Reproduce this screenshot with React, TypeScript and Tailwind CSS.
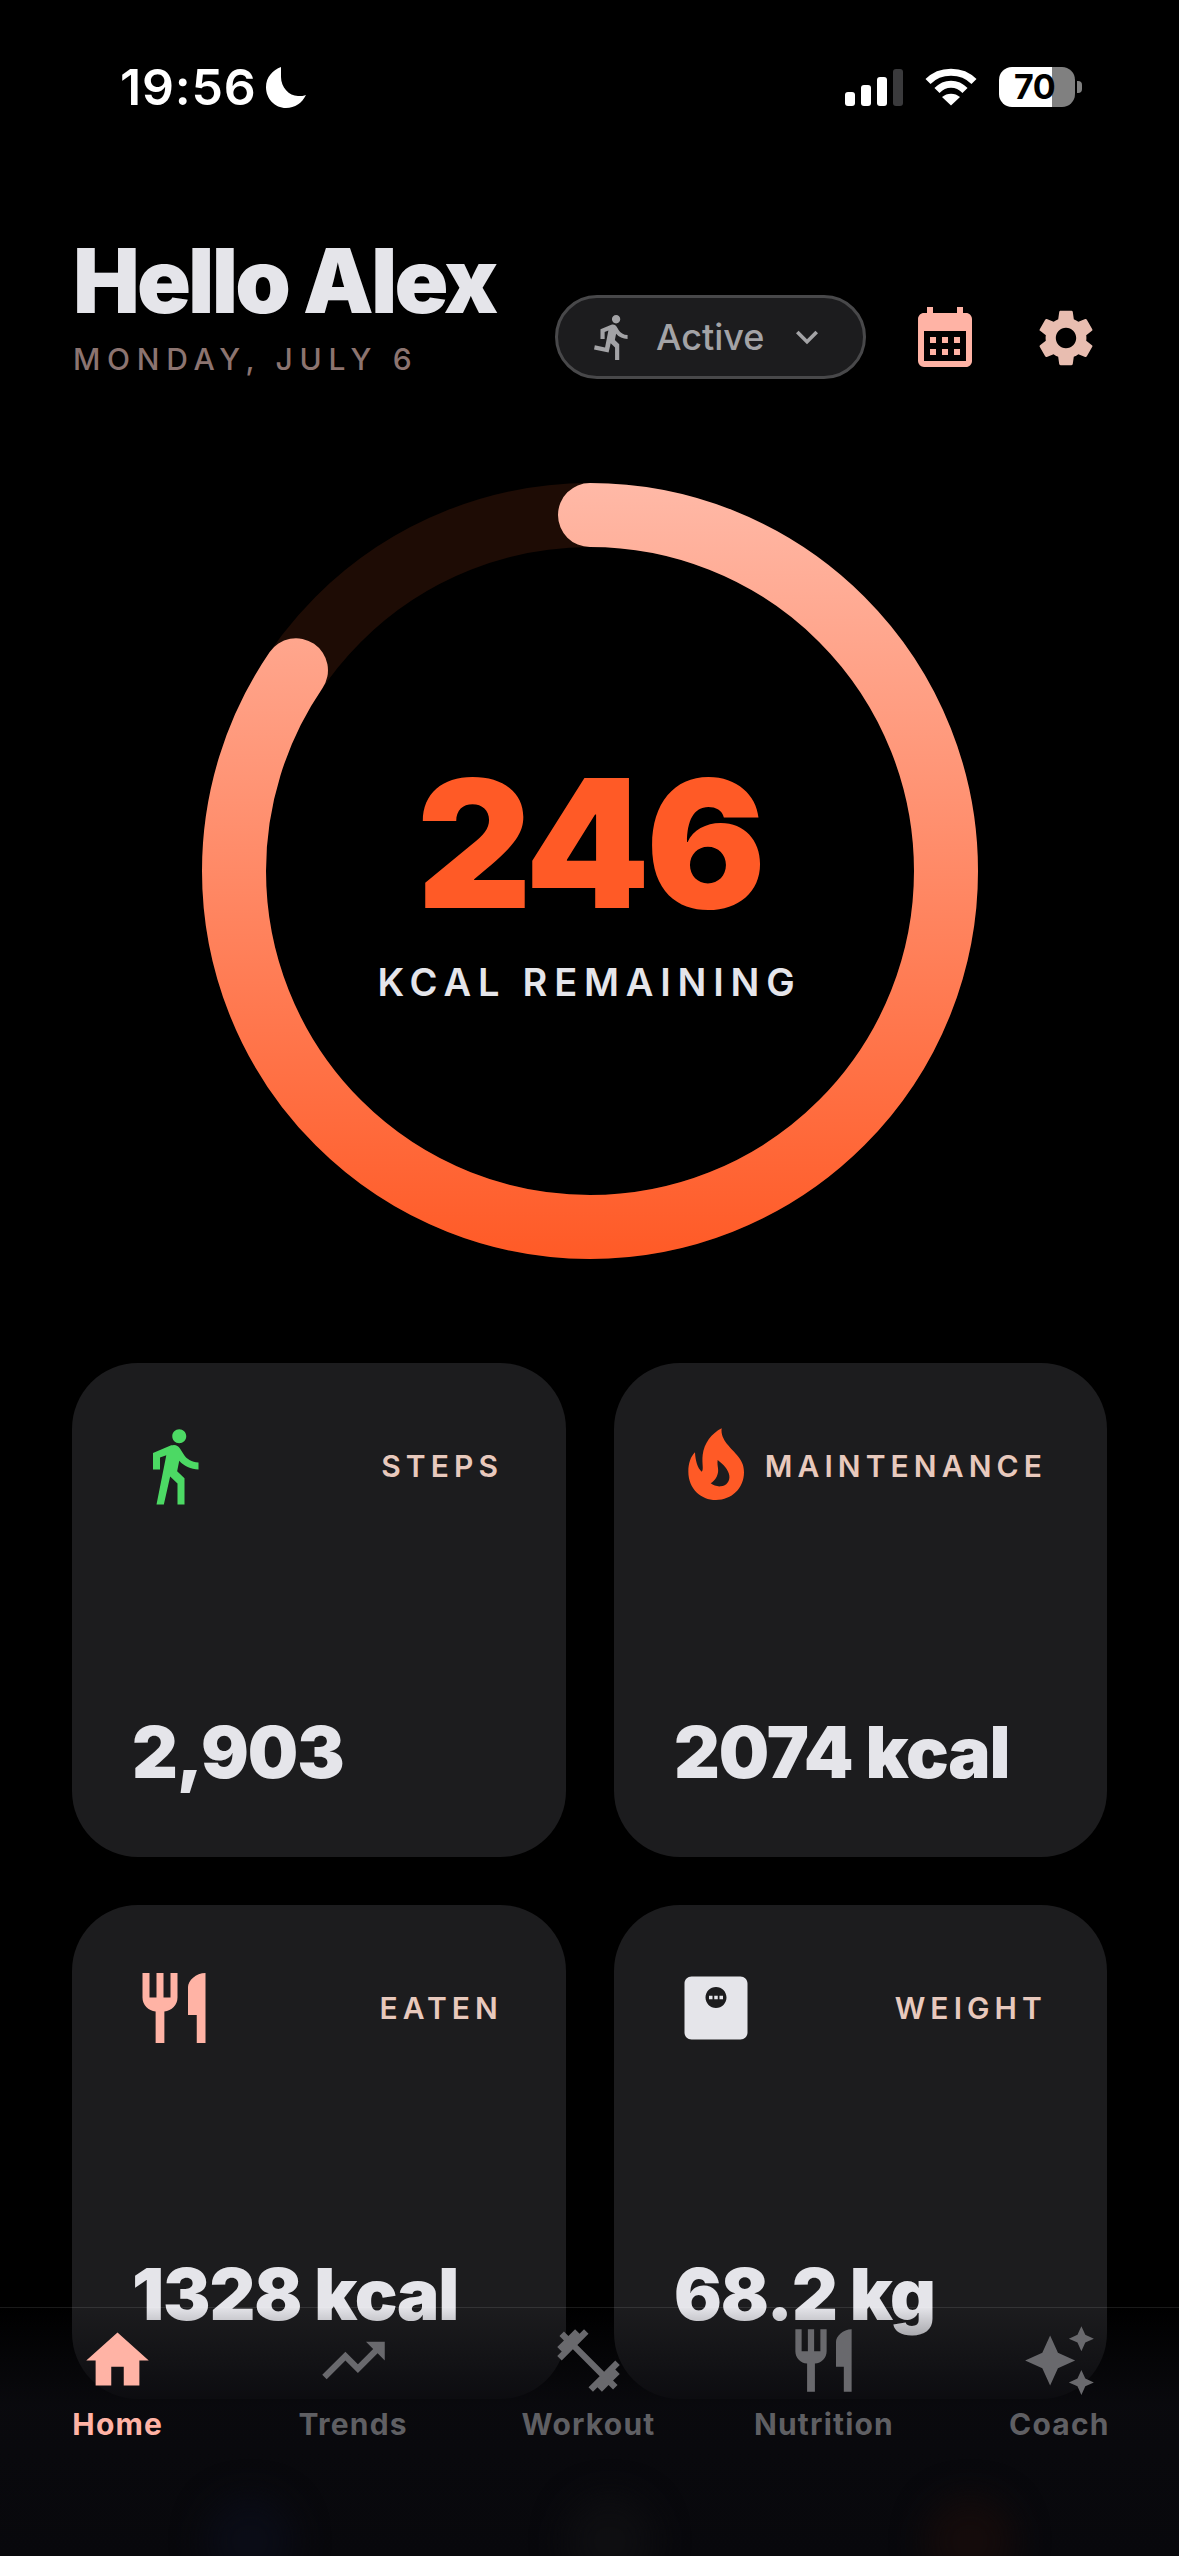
import React from 'react';
import {
  MdAutoAwesome,
  MdCalendarMonth,
  MdDirectionsRun,
  MdDirectionsWalk,
  MdFitnessCenter,
  MdHome,
  MdKeyboardArrowDown,
  MdMonitorWeight,
  MdRestaurant,
  MdSettings,
  MdTrendingUp,
} from 'react-icons/md';

const StatusBar: React.FC = () => (
  <div className="flex h-[176px] items-start justify-between pt-[67px] pl-[120px] pr-[97px]">
    <div className="flex items-center gap-[9px]">
      <span className="text-[50px] leading-[41px] font-semibold tracking-[0.8px] text-white">19:56</span>
      <svg width="40" height="41" viewBox="0 0 40 41" fill="#fff">
        <path d="M15 0C7 3 0 10 0 20c0 12 9 21 20 21 9 0 16-5 20-13-2 1-5 1-8 1C23 29 15 20 15 10c0-4 0-7 0-10z" />
      </svg>
    </div>
    <div className="flex items-center gap-[22px]">
      <div className="flex h-[38px] items-end gap-[6px]">
        <div className="h-[14px] w-[10px] rounded-[3px] bg-white" />
        <div className="h-[21px] w-[10px] rounded-[3px] bg-white" />
        <div className="h-[29px] w-[10px] rounded-[3px] bg-white" />
        <div className="h-[37px] w-[10px] rounded-[3px] bg-[#3a3a3c]" />
      </div>
      <svg width="52" height="38" viewBox="0 0 52 38" fill="none" stroke="#fff" strokeWidth="7">
        <path d="M3 13.5C15 1 37 1 49 13.5" />
        <path d="M12 22.5C20 14 32 14 40 22.5" />
        <path d="M26 37.5 L17 29 C22 24.5 30 24.5 35 29 Z" fill="#fff" stroke="none" />
      </svg>
      <div className="flex items-center gap-[2px]">
        <div className="flex h-[40px] w-[76px] items-center rounded-[13px] bg-[linear-gradient(90deg,#fff_70%,#808080_70%)]">
          <span className="ml-[15px] text-[34px] leading-none font-bold tracking-[-0.5px] text-black">70</span>
        </div>
        <div className="h-[12px] w-[5px] rounded-r-[4px] bg-[#808080]" />
      </div>
    </div>
  </div>
);

const Header: React.FC = () => (
  <div className="flex h-[236px] items-start pl-[73px]">
    <div className="w-[482px]">
      <h1 className="mt-[60px] text-[89px] leading-[90px] font-black tracking-[-2.8px] text-[#e5e5ea]">Hello Alex</h1>
      <p className="mt-[15px] text-[30px] leading-[36px] font-medium tracking-[6.7px] text-[#8c7470]">MONDAY, JULY 6</p>
    </div>
    <div className="mt-[119px] flex h-[84px] w-[311px] items-center rounded-full border-[3px] border-[#48484a] bg-[#1c1c1e] pl-[30px] text-[#a3a3a6]">
      <MdDirectionsRun size={50} className="shrink-0" />
      <span className="ml-[18px] text-[36px] leading-none font-medium">Active</span>
      <MdKeyboardArrowDown size={44} className="ml-[20px] shrink-0" />
    </div>
    <MdCalendarMonth size={72} className="mt-[125px] ml-[43px] shrink-0 text-[#ffb3a5]" />
    <MdSettings size={68} className="mt-[128px] ml-[51px] shrink-0 text-[#e8bdb0]" />
  </div>
);

const CalorieRing: React.FC = () => {
  const radius = 356;
  const circumference = 2 * Math.PI * radius;
  const progress = 0.845;
  return (
    <div className="relative mx-auto mt-[71px] h-[776px] w-[776px]">
      <svg width="776" height="776" viewBox="0 0 776 776" fill="none">
        <defs>
          <linearGradient id="ringGradient" gradientUnits="userSpaceOnUse" x1="776" y1="388" x2="0" y2="388">
            <stop offset="0" stopColor="#ffb9a7" />
            <stop offset="1" stopColor="#ff5a26" />
          </linearGradient>
        </defs>
        <circle cx="388" cy="388" r={radius} stroke="#1e0c05" strokeWidth="64" />
        <circle
          cx="388"
          cy="388"
          r={radius}
          stroke="url(#ringGradient)"
          strokeWidth="64"
          strokeLinecap="round"
          strokeDasharray={`${circumference * progress} ${circumference}`}
          transform="rotate(-90 388 388)"
        />
      </svg>
      <div className="absolute inset-0 flex flex-col items-center">
        <span className="mt-[266px] text-[178px] leading-[190px] font-black tracking-[-4px] text-[#ff5a26]">246</span>
        <span className="mt-[20px] text-[38px] leading-[46px] font-semibold tracking-[6.8px] text-[#e5e5ea]">
          KCAL REMAINING
        </span>
      </div>
    </div>
  );
};

// md flame has a closed inner drop, this one is open like the reference
const FlameIcon: React.FC = () => (
  <svg width="84" height="84" viewBox="12 27 252 252" fill="#ff5a26" fillRule="evenodd">
    <path d="M155 40C150 75 185 100 205 125C218 142 222 155 222 172C222 220 185 255 138 255C92 255 55 220 55 170C55 145 62 125 75 112C76 135 82 160 95 170C102 165 95 145 98 120C102 85 125 55 155 40ZM143 135C140 155 150 165 140 185C135 195 128 200 122 205C130 212 142 215 152 214C170 212 180 198 178 182C176 165 160 148 143 135Z" />
  </svg>
);

type StatCardProps = {
  icon: React.ReactNode;
  label: string;
  value: string;
  left?: boolean;
};

const StatCard: React.FC<StatCardProps> = ({ icon, label, value, left }) => (
  <div className="flex h-[494px] flex-col justify-between rounded-[66px] bg-[#1c1c1e] pt-[61px] pr-[60px] pb-[69px] pl-[60px]">
    <div className="flex h-[84px] items-center justify-between">
      {icon}
      <span
        className={`text-[30px] leading-none font-semibold tracking-[5.1px] text-[#e8c9bd] ${left ? 'mr-[3px]' : ''}`}
      >
        {label}
      </span>
    </div>
    <span className="text-[71px] leading-none font-black tracking-[-1.1px] text-[#e5e5ea]">{value}</span>
  </div>
);

const navItems = [
  { label: 'Home', icon: MdHome, active: true },
  { label: 'Trends', icon: MdTrendingUp, active: false },
  { label: 'Workout', icon: MdFitnessCenter, active: false },
  { label: 'Nutrition', icon: MdRestaurant, active: false },
  { label: 'Coach', icon: MdAutoAwesome, active: false },
];

const BottomNav: React.FC = () => (
  <nav className="absolute inset-x-0 bottom-0 h-[249px] border-t border-white/10 bg-gradient-to-b bg-origin-border from-[#0a0a0e00] via-[#0a0a0ef2] via-40% to-[#08080c]">
    <div className="absolute bottom-[-30px] left-[205px] h-[90px] w-[90px] rounded-full bg-[#0a0c16] blur-[16px]" />
    <div className="absolute bottom-[-30px] left-[565px] h-[90px] w-[90px] rounded-full bg-[#0e0e11] blur-[16px]" />
    <div className="absolute bottom-[-30px] left-[925px] h-[90px] w-[90px] rounded-full bg-[#140b0b] blur-[16px]" />
    <div className="relative flex pt-[15px] pr-[2px]">
      {navItems.map(({ label, icon: Icon, active }) => (
        <div key={label} className="flex flex-1 flex-col items-center">
          <Icon size={75} className={active ? 'text-[#ffb3a5]' : 'text-[#69696d]'} />
          <span
            className={`mt-[8px] text-[30px] leading-[36px] font-bold tracking-[1.2px] ${
              active ? 'text-[#ffb3a5]' : 'text-[#5f5f63]'
            }`}
          >
            {label}
          </span>
        </div>
      ))}
    </div>
  </nav>
);

const App: React.FC = () => {
  return (
    <div className="relative h-[2556px] w-[1179px] overflow-hidden bg-black font-['Inter',sans-serif]">
      <StatusBar />
      <Header />
      <CalorieRing />
      <div className="mt-[104px] grid grid-cols-[494px_493px] gap-x-[48px] gap-y-[48px] pl-[72px]">
        <StatCard
          icon={<MdDirectionsWalk size={84} className="text-[#4cd964]" />}
          label="STEPS"
          value="2,903"
          left
        />
        <StatCard icon={<FlameIcon />} label="MAINTENANCE" value="2074 kcal" />
        <StatCard
          icon={<MdRestaurant size={84} className="text-[#ffb3a5]" />}
          label="EATEN"
          value="1328 kcal"
          left
        />
        <StatCard
          icon={<MdMonitorWeight size={84} className="text-[#e5e5ea]" />}
          label="WEIGHT"
          value="68.2 kg"
        />
      </div>
      <BottomNav />
    </div>
  );
};

export default App;
